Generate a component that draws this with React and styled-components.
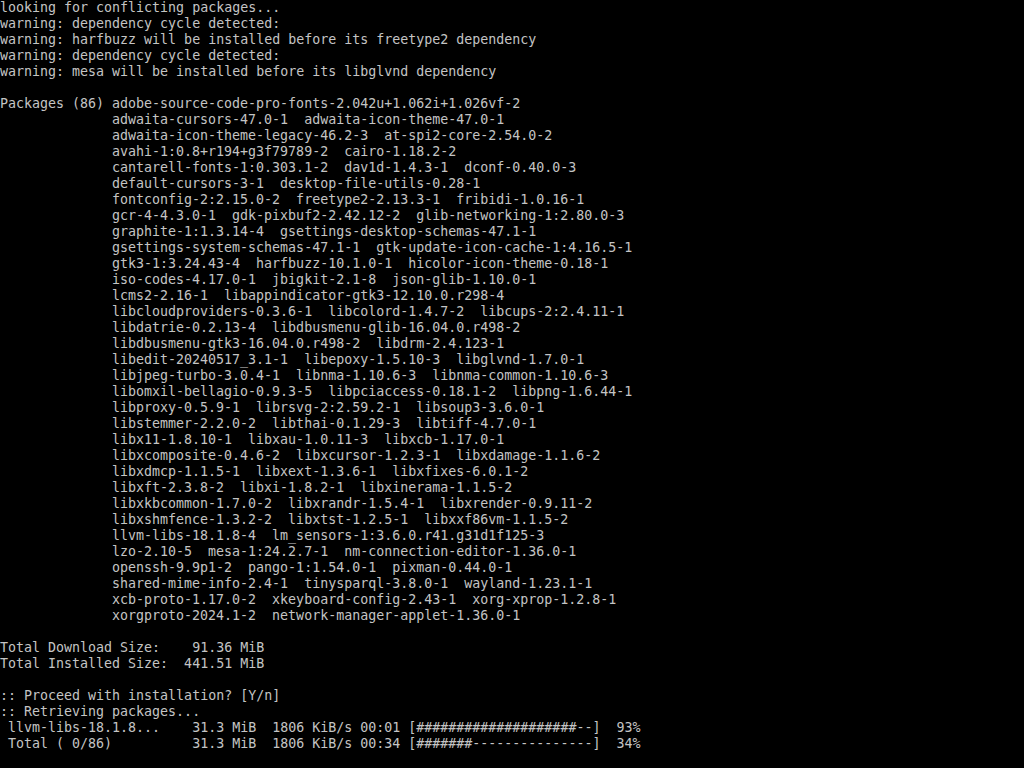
import React from "react";
import styled, { createGlobalStyle } from "styled-components";

const GlobalStyle = createGlobalStyle`
  html, body {
    margin: 0;
    padding: 0;
    background: #000;
  }
`;

const warnings = [
  "looking for conflicting packages...",
  "warning: dependency cycle detected:",
  "warning: harfbuzz will be installed before its freetype2 dependency",
  "warning: dependency cycle detected:",
  "warning: mesa will be installed before its libglvnd dependency",
];

const packages = [
  "adobe-source-code-pro-fonts-2.042u+1.062i+1.026vf-2",
  "adwaita-cursors-47.0-1  adwaita-icon-theme-47.0-1",
  "adwaita-icon-theme-legacy-46.2-3  at-spi2-core-2.54.0-2",
  "avahi-1:0.8+r194+g3f79789-2  cairo-1.18.2-2",
  "cantarell-fonts-1:0.303.1-2  dav1d-1.4.3-1  dconf-0.40.0-3",
  "default-cursors-3-1  desktop-file-utils-0.28-1",
  "fontconfig-2:2.15.0-2  freetype2-2.13.3-1  fribidi-1.0.16-1",
  "gcr-4-4.3.0-1  gdk-pixbuf2-2.42.12-2  glib-networking-1:2.80.0-3",
  "graphite-1:1.3.14-4  gsettings-desktop-schemas-47.1-1",
  "gsettings-system-schemas-47.1-1  gtk-update-icon-cache-1:4.16.5-1",
  "gtk3-1:3.24.43-4  harfbuzz-10.1.0-1  hicolor-icon-theme-0.18-1",
  "iso-codes-4.17.0-1  jbigkit-2.1-8  json-glib-1.10.0-1",
  "lcms2-2.16-1  libappindicator-gtk3-12.10.0.r298-4",
  "libcloudproviders-0.3.6-1  libcolord-1.4.7-2  libcups-2:2.4.11-1",
  "libdatrie-0.2.13-4  libdbusmenu-glib-16.04.0.r498-2",
  "libdbusmenu-gtk3-16.04.0.r498-2  libdrm-2.4.123-1",
  "libedit-20240517_3.1-1  libepoxy-1.5.10-3  libglvnd-1.7.0-1",
  "libjpeg-turbo-3.0.4-1  libnma-1.10.6-3  libnma-common-1.10.6-3",
  "libomxil-bellagio-0.9.3-5  libpciaccess-0.18.1-2  libpng-1.6.44-1",
  "libproxy-0.5.9-1  librsvg-2:2.59.2-1  libsoup3-3.6.0-1",
  "libstemmer-2.2.0-2  libthai-0.1.29-3  libtiff-4.7.0-1",
  "libx11-1.8.10-1  libxau-1.0.11-3  libxcb-1.17.0-1",
  "libxcomposite-0.4.6-2  libxcursor-1.2.3-1  libxdamage-1.1.6-2",
  "libxdmcp-1.1.5-1  libxext-1.3.6-1  libxfixes-6.0.1-2",
  "libxft-2.3.8-2  libxi-1.8.2-1  libxinerama-1.1.5-2",
  "libxkbcommon-1.7.0-2  libxrandr-1.5.4-1  libxrender-0.9.11-2",
  "libxshmfence-1.3.2-2  libxtst-1.2.5-1  libxxf86vm-1.1.5-2",
  "llvm-libs-18.1.8-4  lm_sensors-1:3.6.0.r41.g31d1f125-3",
  "lzo-2.10-5  mesa-1:24.2.7-1  nm-connection-editor-1.36.0-1",
  "openssh-9.9p1-2  pango-1:1.54.0-1  pixman-0.44.0-1",
  "shared-mime-info-2.4-1  tinysparql-3.8.0-1  wayland-1.23.1-1",
  "xcb-proto-1.17.0-2  xkeyboard-config-2.43-1  xorg-xprop-1.2.8-1",
  "xorgproto-2024.1-2  network-manager-applet-1.36.0-1",
];

const downloads = [
  { name: "llvm-libs-18.1.8...", size: "31.3 MiB", rate: "1806 KiB/s", eta: "00:01", percent: 93 },
  { name: "Total ( 0/86)", size: "31.3 MiB", rate: "1806 KiB/s", eta: "00:34", percent: 34 },
];

const BAR_WIDTH = 22;

const progressLine = (d) => {
  const filled = Math.floor((BAR_WIDTH * d.percent) / 100);
  const bar = "#".repeat(filled) + "-".repeat(BAR_WIDTH - filled);
  return (
    " " +
    d.name.padEnd(23) +
    d.size +
    "  " +
    d.rate +
    " " +
    d.eta +
    " [" +
    bar +
    "]" +
    String(d.percent).padStart(4) +
    "%"
  );
};

const App = () => {
  return (
    <>
      <GlobalStyle />
      <Screen>
        {warnings.map((text, i) => (
          <Line key={i}>{text}</Line>
        ))}
        <Line />
        <PackageBlock>
          <Label>Packages (86) </Label>
          <PackageList>
            {packages.map((text, i) => (
              <Line key={i}>{text}</Line>
            ))}
          </PackageList>
        </PackageBlock>
        <Line />
        <Line>{"Total Download Size:    91.36 MiB"}</Line>
        <Line>{"Total Installed Size:  441.51 MiB"}</Line>
        <Line />
        <Line>{":: Proceed with installation? [Y/n]"}</Line>
        <Line>{":: Retrieving packages..."}</Line>
        {downloads.map((d, i) => (
          <Line key={i}>{progressLine(d)}</Line>
        ))}
      </Screen>
    </>
  );
};

const Screen = styled.div`
  width: 1024px;
  height: 768px;
  overflow: hidden;
  background: #000;
  color: #c4c4c4;
  font-family: "DejaVu Sans Mono", "Liberation Mono", monospace;
  font-size: 13.3px;
  display: flex;
  flex-direction: column;
`;

const Line = styled.div`
  height: 16px;
  line-height: 16px;
  white-space: pre;
`;

const PackageBlock = styled.div`
  display: flex;
  flex-direction: row;
`;

const Label = styled.div`
  width: 112px;
  flex-shrink: 0;
  height: 16px;
  line-height: 16px;
  white-space: pre;
`;

const PackageList = styled.div`
  display: flex;
  flex-direction: column;
`;

export default App;
